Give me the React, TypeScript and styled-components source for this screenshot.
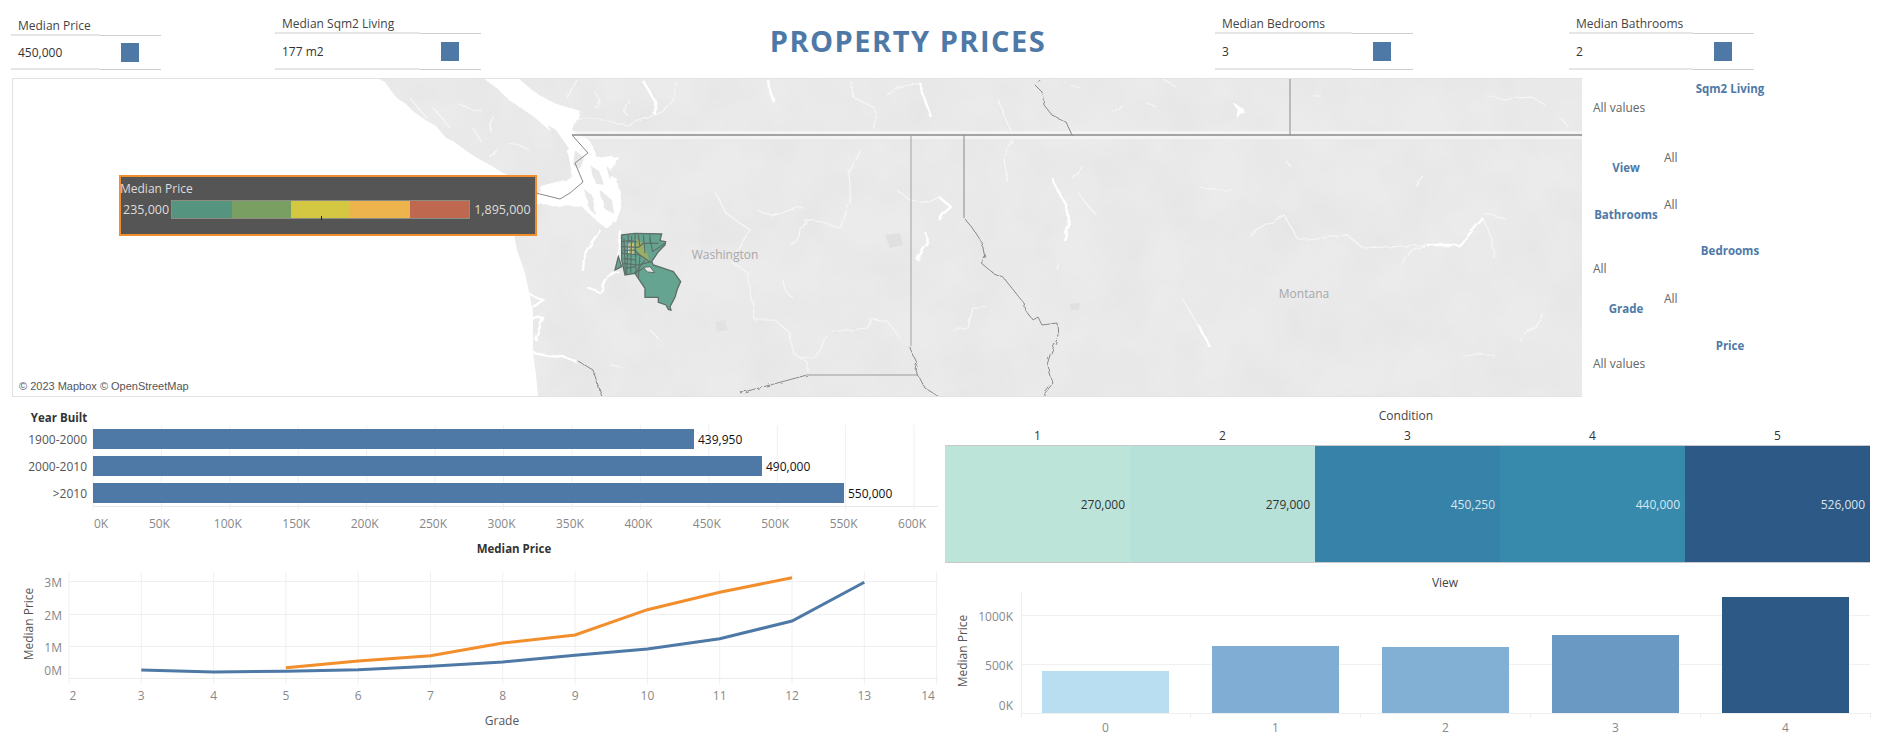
import React from "react";
import styled, { createGlobalStyle } from "styled-components";

const GlobalStyle = createGlobalStyle`
  html, body {
    margin: 0;
    background: #fff;
  }
  #root {
    width: 1881px;
    height: 746px;
    overflow: hidden;
    font-family: "Open Sans", "Noto Sans", sans-serif;
    font-size: 12px;
  }
`;

const Page = styled.div`
  display: flex;
  flex-direction: column;
  width: 1881px;
  height: 746px;
`;

const Header = styled.div`
  display: grid;
  grid-template-columns: 264px 326px 614px 354px 1fr;
  height: 78px;
  padding-left: 11px;
  box-sizing: border-box;
`;

const Kpi = styled.div<{ $width: number }>`
  width: ${(p) => p.$width}px;
  height: 70px;
  display: flex;
  flex-direction: column;
  justify-content: flex-end;
`;

const KpiLabel = styled.div`
  color: #444;
  padding-left: 7px;
  line-height: 16px;
`;

const KpiRule = styled.div<{ $split: number }>`
  height: 2px;
  background:
    linear-gradient(to right, #e6e6e6 ${(p) => p.$split}px, transparent ${(p) => p.$split}px),
    linear-gradient(to bottom, transparent 1px, #cfcfcf 1px);
`;

const KpiBody = styled.div<{ $height: number; $squareAt: number }>`
  height: ${(p) => p.$height}px;
  display: grid;
  grid-template-columns: ${(p) => p.$squareAt}px 18px;
  align-items: center;
`;

const KpiValue = styled.div`
  color: #333;
  padding-left: 7px;
`;

const KpiSquare = styled.div`
  width: 18px;
  height: 19px;
  background: #4e79a7;
`;

const Title = styled.div`
  align-self: center;
  text-align: center;
  color: #4e79a7;
  font-size: 29px;
  font-weight: 700;
  letter-spacing: 1.5px;
  margin-top: 3px;
  white-space: nowrap;
`;

const MapRow = styled.div`
  display: flex;
  height: 319px;
  padding-left: 12px;
`;

const MapCanvas = styled.div`
  position: relative;
  width: 1570px;
  height: 319px;
  box-sizing: border-box;
  border: 1px solid #e2e2e2;
  border-right: none;
  overflow: hidden;
`;

const MapSvg = styled.svg`
  position: absolute;
  left: -1px;
  top: -1px;
`;

const Legend = styled.div`
  position: absolute;
  left: 106px;
  top: 96px;
  width: 418px;
  height: 61px;
  box-sizing: border-box;
  border: 2px solid #f28e2b;
  background: #555;
  color: #ddd;
  font-size: 12.5px;
`;

const LegendTitle = styled.div`
  font-size: 12px;
  line-height: 18px;
  margin: 3px 0 0 -1px;
`;

const LegendRow = styled.div`
  display: flex;
  align-items: center;
  margin-top: 2px;
  height: 19px;
  padding-left: 2px;
`;

const LegendBar = styled.div`
  position: relative;
  display: flex;
  width: 299px;
  height: 19px;
  margin: 0 4px 0 2px;
  box-sizing: border-box;
  border: 1px solid #8c8c82;
`;

const LegendSwatch = styled.div<{ $color: string }>`
  flex: 1;
  background: ${(p) => p.$color};
`;

const LegendTick = styled.div`
  position: absolute;
  left: 149px;
  bottom: -2px;
  width: 1px;
  height: 4px;
  background: #222;
`;

const Copyright = styled.div`
  position: absolute;
  left: 1px;
  bottom: 0;
  padding: 3px 5px;
  background: rgba(255, 255, 255, 0.75);
  color: #555;
  font-family: "Liberation Sans", sans-serif;
  font-size: 11px;
  line-height: 13px;
`;

const FilterPanel = styled.div`
  width: 289px;
  padding: 2px 0 0 10px;
`;

const FilterWide = styled.div<{ $gap: number }>`
  width: 276px;
  margin-top: ${(p) => p.$gap}px;
`;

const FilterNarrow = styled.div<{ $gap: number }>`
  display: flex;
  margin-top: ${(p) => p.$gap}px;
`;

const FilterName = styled.div`
  color: #4e79a7;
  font-weight: 700;
  font-size: 11.5px;
  line-height: 18px;
  text-align: center;
`;

const NarrowName = styled(FilterName)`
  width: 68px;
  margin-top: 10px;
  white-space: nowrap;
`;

const FilterValue = styled.div`
  color: #666;
  line-height: 18px;
  padding-left: 1px;
`;

const WideValue = styled(FilterValue)`
  margin-top: 1px;
`;

const NarrowValue = styled(FilterValue)`
  margin-left: 3px;
`;

const Charts = styled.div`
  display: grid;
  grid-template-columns: 943px 938px;
  height: 349px;
`;

const Column = styled.div`
  display: flex;
  flex-direction: column;
`;

const ChartSvg = styled.svg`
  display: block;
`;

const ChartText = styled.text<{ $anchor?: string; $color?: string; $bold?: boolean }>`
  font-size: ${(p) => (p.$bold ? 11.5 : 12)}px;
  dominant-baseline: central;
  text-anchor: ${(p) => p.$anchor || "middle"};
  fill: ${(p) => p.$color || "#888"};
  font-weight: ${(p) => (p.$bold ? 700 : 400)};
`;

const Heatmap = styled.div`
  width: 925px;
  height: 170px;
  margin-left: 2px;
  padding-top: 10px;
  box-sizing: border-box;
`;

const HeatTitle = styled.div`
  color: #444;
  text-align: center;
  line-height: 18px;
  margin-left: -3px;
`;

const HeatGrid = styled.div`
  display: grid;
  grid-template-columns: repeat(5, 1fr);
`;

const HeatHead = styled.div`
  color: #333;
  text-align: center;
  line-height: 18px;
  margin-top: 2px;
`;

const HeatCell = styled.div<{ $color: string; $light?: boolean }>`
  height: 116px;
  display: flex;
  align-items: center;
  justify-content: flex-end;
  padding-right: 5px;
  background: ${(p) => p.$color};
  color: ${(p) => (p.$light ? "#d9e6ee" : "#333")};
  border-top: 1px solid #c9c9c9;
  border-bottom: 1px solid #c9c9c9;
`;

const coast =
  "377,78 385,82 392,92 397,98 406,104 414,112 427,121 436,126 446,138 453,141 465,150 477,158 490,165 503,173 515,178 520,185 522,228 513,230 517,250 525,273 529,292 533,313 533,353 536,375 538,397 1582,397 1582,78";

const sounds =
  "483,78 497,88 510,101 533,116 547,128 567,148 573,178 540,186 537,205 582,207 598,222 606,228 616,222 622,205 618,180 610,175 617,155 597,158 590,141 573,131 580,111 550,101 533,91 518,78";

const islands = [
  "548,125 556,130 570,150 566,153 552,138",
  "575,150 584,158 580,170 573,165",
  "590,165 600,172 604,185 594,182",
  "600,190 612,200 614,214 604,208",
  "585,190 592,195 596,215 590,210",
  "606,165 612,172 610,180",
];

// lakes and big rivers
const thickWater = [
  "642,80 650,92 655,101 655,115",
  "768,80 771,92 775,103",
  "919,82 925,100 931,117",
  "1052,178 1060,195 1066,205 1069,225 1064,240",
  "1483,218 1475,228 1459,245 1427,245",
  "1198,325 1210,347",
  "917,260 923,250 928,243 925,232",
  "600,230 590,245 583,257 582,270",
  "620,230 619,245 618,257",
  "587,287 600,293 610,273 617,270",
  "527,293 543,300 532,308",
  "533,318 543,318 535,340",
  "533,353 550,356 563,357 577,362",
  "939,197 951,207 945,212 939,220",
];

// creeks and fjords
const thinWater = [
  "460,105 472,110 483,111",
  "508,143 520,146 530,150",
  "410,98 418,108 427,118",
  "433,108 442,118 450,128",
  "473,128 477,135 480,141",
  "492,115 491,123 490,131",
  "490,158 498,151",
  "675,81 673,98 663,111 647,120",
  "578,118 597,118 612,122 627,125 647,118",
  "567,98 577,80",
  "630,98 623,111 628,115",
  "595,92 600,100 595,108",
  "851,80 853,97 875,108 875,130",
  "887,95 903,85 919,82",
  "998,100 1010,130",
  "1012,140 1004,160 1008,183",
  "715,192 726,213 750,230 738,248 733,263 748,273 755,320 775,320 790,333 793,353 808,363 808,373",
  "828,337 813,357 800,358",
  "861,150 849,173 851,200 839,227 822,222 807,220 791,247",
  "758,210 772,216 790,210 803,207",
  "783,280 787,293 793,298",
  "897,190 910,200 927,203 939,197",
  "830,330 850,330 867,328 873,320 888,322 900,338",
  "972,307 987,308",
  "972,307 967,327 952,330",
  "1082,167 1072,178",
  "1076,190 1086,203 1096,215",
  "1200,187 1215,190 1233,190",
  "1112,113 1122,105",
  "1146,103 1156,107",
  "1070,85 1080,88",
  "1164,80 1176,87",
  "1403,265 1411,250 1427,245 1363,248 1347,235 1308,240 1298,240 1284,215 1250,235",
  "1483,218 1493,242 1493,257",
  "1487,96 1503,99 1532,97 1546,106",
  "1562,119 1568,127",
  "1314,97 1322,97",
  "1286,161 1292,168",
  "1415,185 1423,176",
  "1544,315 1528,332 1520,341",
  "1463,356 1480,354 1495,356",
  "1483,213 1505,218",
  "1183,300 1198,325",
  "1057,262 1057,270",
  "610,365 625,368",
  "650,330 660,340",
];

const wigglyBorders = [
  "964,218 974,230 982,243 985,258 980,262 993,273 1003,277 1023,302 1025,310 1033,320 1038,317 1042,325 1057,323 1058,337 1050,355 1047,365 1053,383 1045,393 1045,397",
  "1072,135 1066,122 1052,115 1044,105 1042,92 1035,85 1039,79",
  "578,361 593,370 602,397",
  "740,393 770,385 807,375",
  "909,346 917,363 915,368 918,375 925,388 938,396",
];

const tractLines = [
  "185,95 210,92 232,96",
  "185,110 235,112 250,100 295,100",
  "190,122 222,120 240,135",
  "185,130 240,135 270,155",
  "190,145 228,150",
  "190,160 235,165 275,155",
  "195,175 228,170",
  "225,72 228,190",
  "205,75 200,195",
  "215,78 212,188",
  "250,75 255,130",
  "270,85 278,125 315,100",
  "240,135 235,205",
  "255,150 225,190",
  "192,85 196,190",
  "235,75 240,110",
  "270,75 270,100",
  "225,190 250,175",
];

const WaterLayer = () => (
  <g filter="url(#rough)">
    <polygon points={sounds} fill="#fff" />
    {islands.map((pts) => (
      <polygon key={pts} points={pts} fill="#e8e8e8" />
    ))}
    <polygon points="1233,103 1243,108 1245,113 1236,118 1238,110" fill="#fff" />
    {thickWater.map((pts) => (
      <polyline key={pts} points={pts} fill="none" stroke="#fff" strokeWidth="2.4" />
    ))}
    {thinWater.map((pts) => (
      <polyline key={pts} points={pts} fill="none" stroke="#f7f7f7" strokeWidth="1.2" />
    ))}
  </g>
);

const KingCounty = () => (
  <g transform="translate(560 210) scale(0.3333)">
    <polygon
      points="185,75 225,70 305,72 300,92 317,95 315,105 295,125 275,155 280,165 320,178 340,185 362,215 352,238 345,262 330,290 333,300 325,298 318,285 295,277 295,262 255,262 255,235 235,205 225,190 195,195 185,150"
      fill="#65a490"
      stroke="#5e6e68"
      strokeWidth="4"
    />
    <polygon points="175,140 165,180 185,170" fill="#65a490" stroke="#5e6e68" strokeWidth="4" />
    <polygon points="225,85 250,100 270,155 240,135 225,110" fill="#9cae66" />
    <polygon points="210,100 222,100 222,135 210,130" fill="#c9c26a" />
    <polygon points="203,100 208,100 208,130 203,128" fill="#fff" />
    <polygon points="250,172 270,170 284,188 262,186" fill="#e7e7e7" stroke="#5e6e68" strokeWidth="3" />
    {tractLines.map((pts) => (
      <polyline key={pts} points={pts} fill="none" stroke="#5e6e68" strokeWidth="3.4" />
    ))}
  </g>
);

const MapDrawing = () => (
  <MapSvg width="1570" height="319" viewBox="12 78 1570 319">
    <defs>
      <filter id="terrain" x="0" y="0" width="100%" height="100%">
        <feTurbulence type="fractalNoise" baseFrequency="0.02" numOctaves="3" seed="4" />
        <feColorMatrix values="0 0 0 0 0.5  0 0 0 0 0.5  0 0 0 0 0.5  0.2 0 0 0 -0.06" />
        <feComposite in2="SourceGraphic" operator="in" result="shade" />
        <feMerge>
          <feMergeNode in="SourceGraphic" />
          <feMergeNode in="shade" />
        </feMerge>
      </filter>
      <filter id="rough" x="-5%" y="-5%" width="110%" height="110%">
        <feTurbulence type="fractalNoise" baseFrequency="0.09" numOctaves="2" seed="7" />
        <feDisplacementMap in="SourceGraphic" scale="5" />
      </filter>
      <filter id="wiggle" x="-5%" y="-5%" width="110%" height="110%">
        <feTurbulence type="fractalNoise" baseFrequency="0.18" numOctaves="2" seed="3" />
        <feDisplacementMap in="SourceGraphic" scale="4" />
      </filter>
    </defs>
    <polygon points={coast} fill="#ebebeb" filter="url(#terrain)" />
    <rect x="572" y="131" width="1010" height="8" fill="#f3f3f3" />
    <WaterLayer />
    <polygon points="885,235 900,233 903,245 890,248" fill="#e0e0e0" />
    <polygon points="1070,304 1080,303 1079,310 1071,310" fill="#e0e0e0" />
    <polygon points="715,322 725,320 728,330 717,332" fill="#e2e2e2" />
    <g fill="none" stroke="#888" strokeWidth="1" filter="url(#wiggle)">
      {wigglyBorders.map((pts) => (
        <polyline key={pts} points={pts} />
      ))}
    </g>
    <polyline
      points="572,135 588,153 575,163 583,182 570,193 560,199 536,193"
      fill="none"
      stroke="#8a8a8a"
      strokeWidth="1"
    />
    <line x1="572" y1="135" x2="1582" y2="135" stroke="#8a8a8a" strokeWidth="1.3" />
    <line x1="911" y1="135" x2="911" y2="346" stroke="#a2a2a2" strokeWidth="1" />
    <line x1="964" y1="135" x2="964" y2="218" stroke="#8a8a8a" strokeWidth="1" />
    <line x1="1290" y1="78" x2="1290" y2="135" stroke="#8a8a8a" strokeWidth="1" />
    <line x1="807" y1="375" x2="918" y2="375" stroke="#999" strokeWidth="1.2" />
    <KingCounty />
    <ChartText x="725" y="254" $color="#a8a8a8">
      Washington
    </ChartText>
    <ChartText x="1304" y="293" $color="#a8a8a8">
      Montana
    </ChartText>
  </MapSvg>
);

const yearBars = [
  { label: "1900-2000", value: "439,950", y: 429, right: 694 },
  { label: "2000-2010", value: "490,000", y: 456, right: 762 },
  { label: ">2010", value: "550,000", y: 483, right: 844 },
];

const priceTicks = ["0K", "50K", "100K", "150K", "200K", "250K", "300K", "350K", "400K", "450K", "500K", "550K", "600K"];

const YearChart = () => (
  <ChartSvg width="943" height="163" viewBox="0 397 943 163">
    {priceTicks.map((tick, i) => {
      const x = 93 + i * 68.42;
      return (
        <g key={tick}>
          <line x1={x} y1="425" x2={x} y2="510" stroke="#f0f0f0" />
          <ChartText x={i === 0 ? 101 : x - 2} y="523">
            {tick}
          </ChartText>
        </g>
      );
    })}
    <line x1="93" y1="506.5" x2="938" y2="506.5" stroke="#e8e8e8" />
    {yearBars.map((bar) => (
      <g key={bar.label}>
        <rect x="93" y={bar.y} width={bar.right - 93} height="20" fill="#4e79a7" />
        <ChartText x="87" y={bar.y + 10.5} $anchor="end" $color="#555">
          {bar.label}
        </ChartText>
        <ChartText x={bar.right + 4} y={bar.y + 10.5} $anchor="start" $color="#111">
          {bar.value}
        </ChartText>
      </g>
    ))}
    <ChartText x="59" y="417" $color="#333" $bold>
      Year Built
    </ChartText>
    <ChartText x="514" y="548" $color="#333" $bold>
      Median Price
    </ChartText>
  </ChartSvg>
);

const gradeX = (g: number) => 69 + (g - 2) * 72.3;
const grades = [2, 3, 4, 5, 6, 7, 8, 9, 10, 11, 12, 13, 14];
const blueLine = [670, 672, 671.3, 669.7, 666.3, 662, 655.3, 649, 638.7, 621, 582.3];
const orangeLine = [667.7, 661, 655.7, 643, 635, 609.7, 592.3, 577.7];
const toPoints = (ys: number[], first: number) => ys.map((y, i) => `${gradeX(first + i)},${y}`).join(" ");

const GradeChart = () => (
  <ChartSvg width="943" height="186" viewBox="0 560 943 186">
    {grades.map((g) => (
      <g key={g}>
        <line x1={gradeX(g)} y1="572" x2={gradeX(g)} y2="684" stroke="#f0f0f0" />
        <ChartText x={g === 2 ? 73 : g === 14 ? 928 : gradeX(g)} y="695">
          {g}
        </ChartText>
      </g>
    ))}
    {[
      { label: "3M", y: 581, at: 582 },
      { label: "2M", y: 614, at: 615 },
      { label: "1M", y: 646, at: 647 },
    ].map((row) => (
      <g key={row.label}>
        <line x1="69" y1={row.y + 0.5} x2="938" y2={row.y + 0.5} stroke="#f0f0f0" />
        <ChartText x="62" y={row.at} $anchor="end">
          {row.label}
        </ChartText>
      </g>
    ))}
    <ChartText x="62" y="670" $anchor="end">
      0M
    </ChartText>
    <line x1="69" y1="678.5" x2="938" y2="678.5" stroke="#ececec" />
    <polyline points={toPoints(blueLine, 3)} fill="none" stroke="#4e79a7" strokeWidth="3" />
    <polyline points={toPoints(orangeLine, 5)} fill="none" stroke="#f28e2b" strokeWidth="3" />
    <ChartText x="28" y="624" $color="#555" transform="rotate(-90 28 624)">
      Median Price
    </ChartText>
    <ChartText x="502" y="720" $color="#555">
      Grade
    </ChartText>
  </ChartSvg>
);

const viewBars = [
  { label: "0", x: 1042, top: 671, color: "#b9ddf1" },
  { label: "1", x: 1212, top: 646, color: "#7fadd4" },
  { label: "2", x: 1382, top: 647, color: "#82b0d4" },
  { label: "3", x: 1552, top: 635, color: "#6a9ac3" },
  { label: "4", x: 1722, top: 597, color: "#2c5985" },
];

const ViewChart = () => (
  <ChartSvg width="938" height="179" viewBox="943 567 938 179">
    <ChartText x="1445" y="582" $color="#444">
      View
    </ChartText>
    <line x1="1021.5" y1="592" x2="1021.5" y2="718" stroke="#eeeeee" />
    {[
      { label: "1000K", y: 615, at: 616 },
      { label: "500K", y: 664, at: 665 },
      { label: "0K", y: 713, at: 705 },
    ].map((row) => (
      <g key={row.label}>
        <line x1="1021" y1={row.y + 0.5} x2="1870" y2={row.y + 0.5} stroke="#f0f0f0" />
        <ChartText x="1013" y={row.at} $anchor="end">
          {row.label}
        </ChartText>
      </g>
    ))}
    {[1190, 1360, 1530, 1700, 1870].map((x) => (
      <line key={x} x1={x + 0.5} y1="713" x2={x + 0.5} y2="718" stroke="#eeeeee" />
    ))}
    {viewBars.map((bar) => (
      <g key={bar.label}>
        <rect x={bar.x} y={bar.top} width="127" height={713 - bar.top} fill={bar.color} />
        <ChartText x={bar.x + 63.5} y="727">
          {bar.label}
        </ChartText>
      </g>
    ))}
    <ChartText x="962" y="651" $color="#555" transform="rotate(-90 962 651)">
      Median Price
    </ChartText>
  </ChartSvg>
);

const kpis = [
  { label: "Median Price", value: "450,000", width: 150, split: 89, height: 32, squareAt: 110 },
  { label: "Median Sqm2 Living", value: "177 m2", width: 206, split: 145, height: 34, squareAt: 166 },
  { label: "Median Bedrooms", value: "3", width: 198, split: 137, height: 34, squareAt: 158 },
  { label: "Median Bathrooms", value: "2", width: 185, split: 124, height: 34, squareAt: 145 },
];

type KpiData = (typeof kpis)[number];

const KpiCard = ({ kpi }: { kpi: KpiData }) => (
  <Kpi $width={kpi.width}>
    <KpiLabel>{kpi.label}</KpiLabel>
    <KpiRule $split={kpi.split} />
    <KpiBody $height={kpi.height} $squareAt={kpi.squareAt}>
      <KpiValue>{kpi.value}</KpiValue>
      <KpiSquare />
    </KpiBody>
    <KpiRule $split={kpi.split} />
  </Kpi>
);

const heatCells = [
  { head: "1", value: "270,000", color: "#bce4d8" },
  { head: "2", value: "279,000", color: "#b5e1d8" },
  { head: "3", value: "450,250", color: "#3682a8", light: true },
  { head: "4", value: "440,000", color: "#388aac", light: true },
  { head: "5", value: "526,000", color: "#2c5985", light: true },
];

const legendColors = ["#55957f", "#799f62", "#d4c842", "#edb44e", "#be694f"];

export default function App() {
  return (
    <Page>
      <GlobalStyle />
      <Header>
        <KpiCard kpi={kpis[0]} />
        <KpiCard kpi={kpis[1]} />
        <Title>PROPERTY PRICES</Title>
        <KpiCard kpi={kpis[2]} />
        <KpiCard kpi={kpis[3]} />
      </Header>
      <MapRow>
        <MapCanvas>
          <MapDrawing />
          <Legend>
            <LegendTitle>Median Price</LegendTitle>
            <LegendRow>
              <span>235,000</span>
              <LegendBar>
                {legendColors.map((c) => (
                  <LegendSwatch key={c} $color={c} />
                ))}
                <LegendTick />
              </LegendBar>
              <span>1,895,000</span>
            </LegendRow>
          </Legend>
          <Copyright>© 2023 Mapbox © OpenStreetMap</Copyright>
        </MapCanvas>
        <FilterPanel>
          <FilterWide $gap={0}>
            <FilterName>Sqm2 Living</FilterName>
            <WideValue>All values</WideValue>
          </FilterWide>
          <FilterNarrow $gap={32}>
            <NarrowName>View</NarrowName>
            <NarrowValue>All</NarrowValue>
          </FilterNarrow>
          <FilterNarrow $gap={19}>
            <NarrowName>Bathrooms</NarrowName>
            <NarrowValue>All</NarrowValue>
          </FilterNarrow>
          <FilterWide $gap={18}>
            <FilterName>Bedrooms</FilterName>
            <FilterValue>All</FilterValue>
          </FilterWide>
          <FilterNarrow $gap={12}>
            <NarrowName>Grade</NarrowName>
            <NarrowValue>All</NarrowValue>
          </FilterNarrow>
          <FilterWide $gap={19}>
            <FilterName>Price</FilterName>
            <FilterValue>All values</FilterValue>
          </FilterWide>
        </FilterPanel>
      </MapRow>
      <Charts>
        <Column>
          <YearChart />
          <GradeChart />
        </Column>
        <Column>
          <Heatmap>
            <HeatTitle>Condition</HeatTitle>
            <HeatGrid>
              {heatCells.map((cell) => (
                <HeatHead key={cell.head}>{cell.head}</HeatHead>
              ))}
              {heatCells.map((cell) => (
                <HeatCell key={cell.head} $color={cell.color} $light={cell.light}>
                  {cell.value}
                </HeatCell>
              ))}
            </HeatGrid>
          </Heatmap>
          <ViewChart />
        </Column>
      </Charts>
    </Page>
  );
}
